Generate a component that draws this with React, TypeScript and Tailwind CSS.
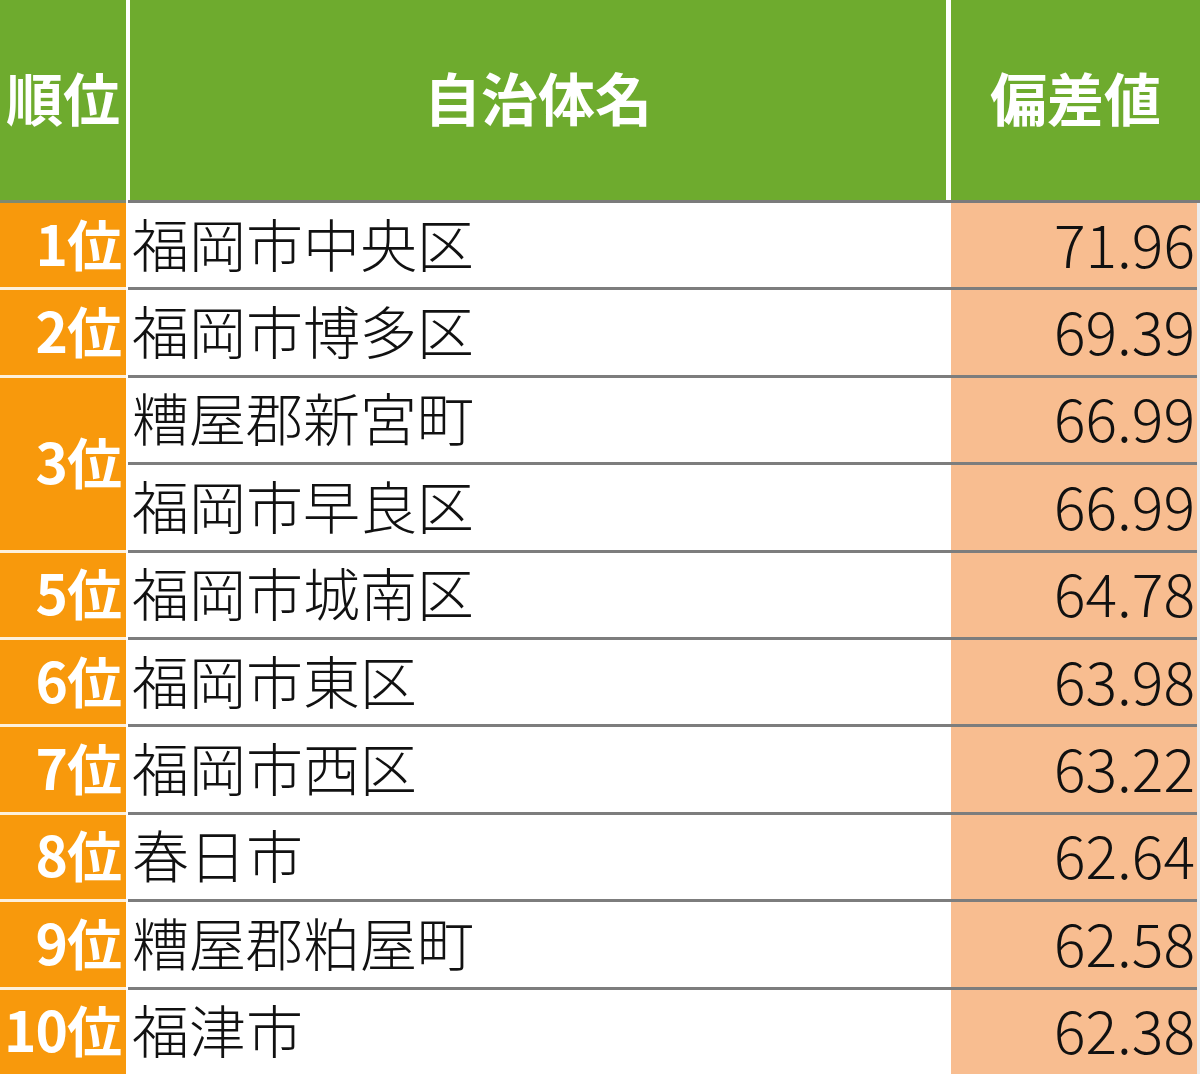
import React from "react";

type Row = { rank: string; items: [string, string][] };

const rows: Row[] = [
  { rank: "1位", items: [["福岡市中央区", "71.96"]] },
  { rank: "2位", items: [["福岡市博多区", "69.39"]] },
  {
    rank: "3位",
    items: [
      ["糟屋郡新宮町", "66.99"],
      ["福岡市早良区", "66.99"],
    ],
  },
  { rank: "5位", items: [["福岡市城南区", "64.78"]] },
  { rank: "6位", items: [["福岡市東区", "63.98"]] },
  { rank: "7位", items: [["福岡市西区", "63.22"]] },
  { rank: "8位", items: [["春日市", "62.64"]] },
  { rank: "9位", items: [["糟屋郡粕屋町", "62.58"]] },
  { rank: "10位", items: [["福津市", "62.38"]] },
];

const ROW_H = 87.4;
const LAST_H = 84.4;

const flat = rows.flatMap((r) => r.items);

export default function App() {
  return (
    <div className="w-[1200px] h-[1074px] overflow-hidden bg-white font-['Noto_Sans_CJK_JP','Noto_Sans',sans-serif]">
      {/* Header */}
      <div className="flex h-[200px] bg-white">
        <div className="w-[126px] bg-[#6eab2e] flex items-center justify-center pb-[8px] text-white font-bold text-[57px] leading-none">
          順位
        </div>
        <div className="w-[4px] bg-white" />
        <div className="w-[816px] bg-[#6eab2e] flex items-center justify-center pb-[8px] text-white font-bold text-[57px] leading-none">
          自治体名
        </div>
        <div className="w-[5px] bg-white" />
        <div className="flex-1 bg-[#6eab2e] flex items-center justify-center pb-[8px] text-white font-bold text-[57px] leading-none">
          偏差値
        </div>
      </div>
      <div className="flex h-[3px]">
        <div className="w-[126px] bg-[#7e8a70]" />
        <div className="w-[2px] bg-white" />
        <div className="flex-1 bg-[#7b7b7b]" />
      </div>

      {/* Body */}
      <div className="flex">
        {/* Rank column */}
        <div className="w-[126px] flex flex-col">
          {rows.map((r, i) => {
            const last = i === rows.length - 1;
            return (
              <div
                key={r.rank}
                style={{ height: last ? LAST_H : ROW_H * r.items.length }}
                className={
                  last
                    ? "box-border bg-[#f8990c] flex items-center justify-end pr-[5px] pb-[6px] text-white font-bold text-[55px] tracking-[-1px] leading-none whitespace-nowrap"
                    : "box-border bg-[#f8990c] border-b-[3px] border-[#fdf0dc] flex items-center justify-end pr-[5px] pb-[6px] text-white font-bold text-[55px] tracking-[-1px] leading-none whitespace-nowrap"
                }
              >
                {r.rank}
              </div>
            );
          })}
        </div>
        <div className="w-[2px] bg-white" />
        {/* Name/value columns */}
        <div className="w-[1069px] flex flex-col">
          {flat.map(([name, val], i) => {
            const last = i === flat.length - 1;
            return (
              <div
                key={name}
                style={{ height: last ? LAST_H : ROW_H }}
                className={
                  last
                    ? "box-border flex"
                    : "box-border flex border-b-[3px] border-[#7d7d7d]"
                }
              >
                <div className="w-[823px] bg-white flex items-center pl-[4px] pb-[6px] text-[#111111] font-light text-[57px] leading-none whitespace-nowrap">
                  {name}
                </div>
                <div className="flex-1 bg-[#f8bd90] flex items-center justify-end pr-[2px] pb-[6px] text-[#111111] font-light text-[59px] leading-none whitespace-nowrap">
                  {val}
                </div>
              </div>
            );
          })}
        </div>
        <div className="w-[3px] bg-[#ececec]" />
      </div>
    </div>
  );
}
